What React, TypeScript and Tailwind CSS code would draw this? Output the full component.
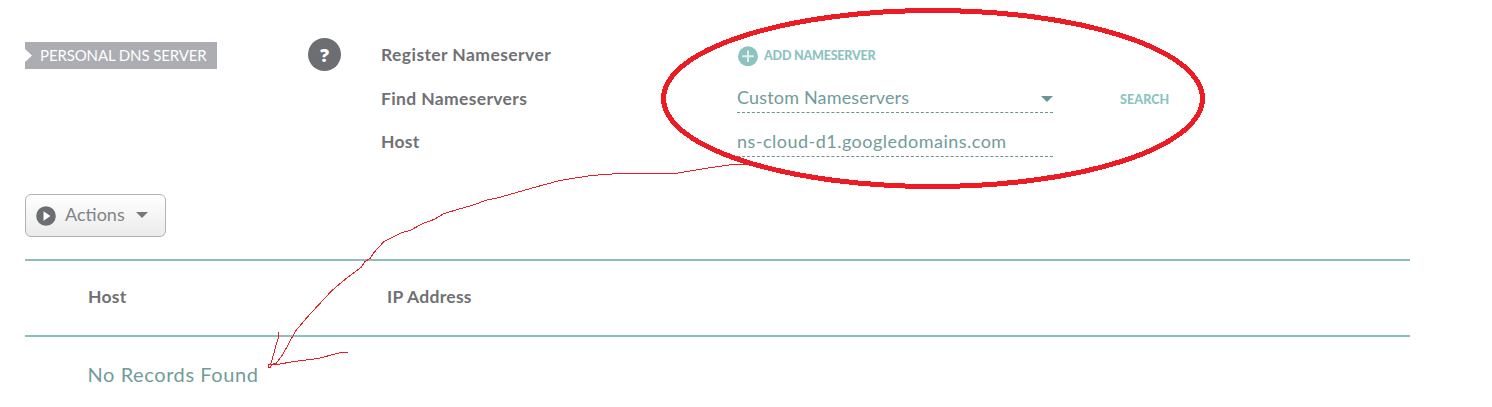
import type { ReactNode } from "react";

function Label({ className = "", children }: { className?: string; children: ReactNode }) {
  return (
    <div className={`w-[356px] whitespace-nowrap text-[17.5px] leading-[26px] font-bold text-[#707174] ${className}`}>
      {children}
    </div>
  );
}

function Annotation() {
  return (
    <svg
      className="pointer-events-none absolute top-0 left-0"
      width="1492"
      height="407"
      fill="none"
      stroke="#ed1c24"
      shapeRendering="crispEdges"
    >
      <ellipse cx="933" cy="98.5" rx="269.5" ry="88" strokeWidth="5" />
      <path d="M752 164.5H733L705 168.5L675 173.5H619L591 175.5L560 180.5L534 187.5L499 197.5L485 200.5L475 204.5L461 208.5L444 213.5L434 219.5L423 223.5L410 230.5L402 232.5L384 241.5L374 252.5L370 258.5L365 261.5L361 267.5L354 272.5L345 279.5L332 290.5L318 305.5L307 317.5L296 330.5L292 337.5L286 348.5L282 355.5L276 363.5H273M268.5 364V367.5H270L272 364.5H277L294 361.5L318 358.5L341 352.5H348M268.5 364.5H272M278.5 332V337L275.5 347L273.5 354.5L270.5 365" />
    </svg>
  );
}

export default function App() {
  return (
    <main className="relative h-[407px] w-[1492px] overflow-hidden bg-white pt-[42px] pl-[25px] font-[Lato,sans-serif]">
      <section className="flex h-[115px] items-start">
        <div className="flex h-[27px] w-[192px] items-center bg-[#abadb2]">
          <svg width="7" height="13" viewBox="0 0 7 13" className="shrink-0">
            <path d="M0 0L7 6.5L0 13Z" fill="#fff" />
          </svg>
          <span className="ml-2 pb-[2px] whitespace-nowrap text-[15px] leading-[24px] tracking-[-0.12px] text-white">PERSONAL DNS SERVER</span>
        </div>
        <div className="-mt-[4px] ml-[91px] flex size-[33px] items-center justify-center rounded-full bg-[#6d6e71] font-['Open_Sans',sans-serif] text-[18px] leading-none font-extrabold text-white">
          ?
        </div>
        <div className="ml-10 flex flex-col">
          <div className="flex h-[43px] items-start">
            <Label className="tracking-[0.42px]">Register Nameserver</Label>
            <button className="flex h-[27px] items-center gap-[6px] text-[#8cc3c1]">
              <svg width="21" height="20" viewBox="0 0 21 20">
                <circle cx="11" cy="10.2" r="10" fill="currentColor" />
                <path d="M11 4.5V16M5.2 10.2H16.8" stroke="#dff0ef" strokeWidth="2" />
              </svg>
              <span className="pt-[2px] whitespace-nowrap text-[12.5px] font-black tracking-[-0.2px]">ADD NAMESERVER</span>
            </button>
          </div>
          <div className="flex h-[44px] items-start">
            <Label className="pt-px tracking-[0.35px]">Find Nameservers</Label>
            <div className="flex h-[28px] w-[316px] items-center justify-between border-b border-dashed border-[#6b9593] pb-[3px] text-[18px] text-[#719c9a]">
              <span className="whitespace-nowrap tracking-[0.17px]">Custom Nameservers</span>
              <svg className="mt-[3px]" width="12" height="6" viewBox="0 0 12 6">
                <path d="M0 0H12L6 6Z" fill="#6b9593" />
              </svg>
            </div>
            <button className="ml-[67px] h-[28px] whitespace-nowrap pt-[3px] text-[12.5px] font-black tracking-[0.1px] text-[#8cc3c1]">SEARCH</button>
          </div>
          <div className="flex h-[28px] items-start">
            <Label className="tracking-[0.25px]">Host</Label>
            <div className="flex h-[28px] w-[316px] items-center border-b border-dashed border-[#6b9593] pb-[3px] text-[18px] text-[#719c9a]">
              <span className="whitespace-nowrap tracking-[0.48px]">ns-cloud-d1.googledomains.com</span>
            </div>
          </div>
        </div>
      </section>

      <button className="mt-[37px] flex h-[43px] w-[141px] items-center rounded-[6px] border border-[#b3b3b3] bg-linear-to-b from-white to-[#ebebeb] pl-[10px] text-[#6d6e71]">
        <svg width="20" height="20" viewBox="0 0 20 20">
          <circle cx="10" cy="10" r="9.8" fill="currentColor" />
          <path d="M7.5 5.2L14.5 10L7.5 14.8Z" fill="#fff" />
        </svg>
        <span className="ml-[9px] w-[61px] pb-[2px] text-left whitespace-nowrap text-[18px] text-[#828385]">Actions</span>
        <svg className="-mt-[2px] ml-[10px]" width="12" height="6" viewBox="0 0 12 6">
          <path d="M0 0H12L6 6Z" fill="#77787a" />
        </svg>
      </button>

      <section className="mt-[22px] w-[1385px]">
        <div className="flex h-[78px] items-center border-y-2 border-[#8abfbd] pb-[2px] pl-[63px] text-[17.5px] font-bold text-[#707174]">
          <span className="w-[299px] tracking-[0.25px]">Host</span>
          <span className="whitespace-nowrap tracking-[0.28px]">IP Address</span>
        </div>
        <div className="flex h-[70px] items-center pt-[4px] pl-[62.5px] text-[20px] text-[#719c9a]">
          <span className="whitespace-nowrap tracking-[0.58px]">No Records Found</span>
        </div>
      </section>
      <Annotation />
    </main>
  );
}
